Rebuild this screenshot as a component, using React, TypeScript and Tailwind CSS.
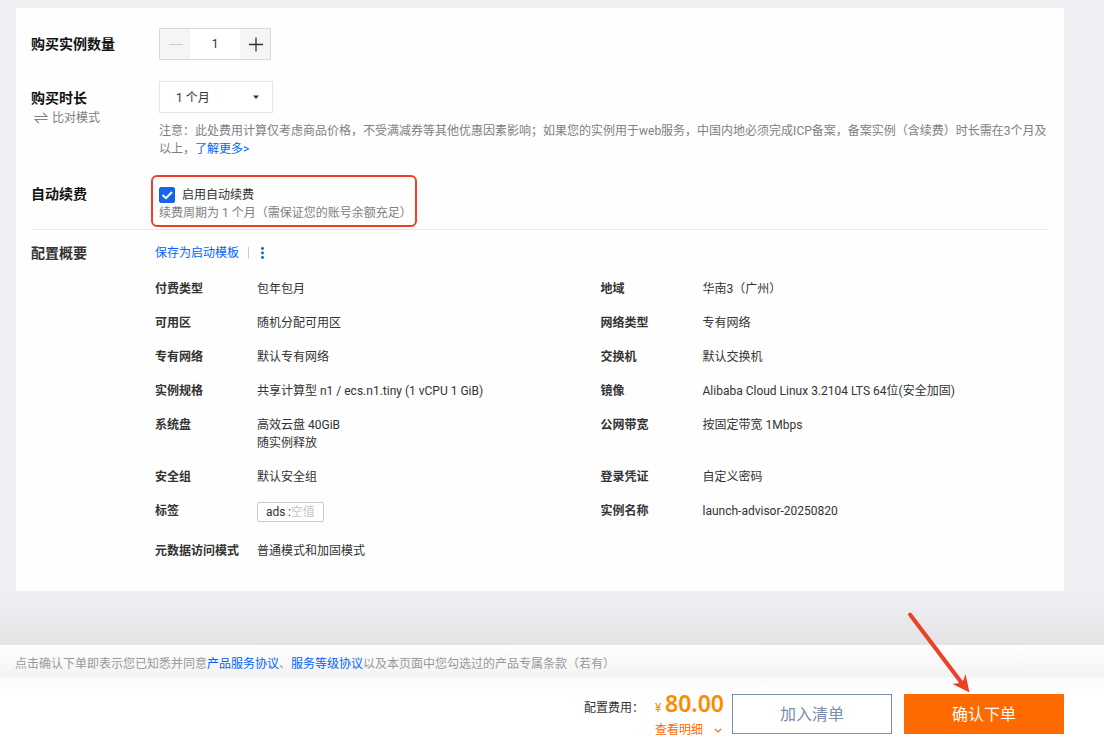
import React, { useState } from 'react';

type SummaryItem = {
    label: string;
    value: React.ReactNode;
};

const summary: SummaryItem[] = [
    { label: '付费类型', value: '包年包月' },
    { label: '地域', value: '华南3（广州）' },
    { label: '可用区', value: '随机分配可用区' },
    { label: '网络类型', value: '专有网络' },
    { label: '专有网络', value: '默认专有网络' },
    { label: '交换机', value: '默认交换机' },
    { label: '实例规格', value: '共享计算型 n1 / ecs.n1.tiny (1 vCPU 1 GiB)' },
    { label: '镜像', value: 'Alibaba Cloud Linux 3.2104 LTS 64位(安全加固)' },
    { label: '系统盘', value: <>高效云盘 40GiB<br />随实例释放</> },
    { label: '公网带宽', value: '按固定带宽 1Mbps' },
    { label: '安全组', value: '默认安全组' },
    { label: '登录凭证', value: '自定义密码' },
    {
        label: '标签',
        value: (
            <span className="mb-1 flex h-5 w-fit items-center rounded-xs border border-[#c8c8c8] px-2">
                ads&thinsp;:<span className="text-[#c8c8c8]">空值</span>
            </span>
        ),
    },
    { label: '实例名称', value: 'launch-advisor-20250820' },
    { label: '元数据访问模式', value: '普通模式和加固模式' },
];

const SwapIcon: React.FC = () => (
    <svg width="14" height="12" viewBox="0 0 14 12" fill="none" stroke="#808080" strokeWidth="1.1">
        <path d="M0.5 4.5H13L9 0.8" />
        <path d="M13.5 7.5H1L5 11.2" />
    </svg>
);

const Stepper: React.FC = () => {
    const [count, setCount] = useState(1);

    return (
        <div className="flex h-8 w-28 border border-[#d9d9d9]">
            <button
                type="button"
                aria-label="减少"
                disabled={count <= 1}
                onClick={() => setCount(count - 1)}
                className="flex w-[30px] items-center justify-center bg-[#f4f5f7] text-[#333] disabled:text-[#ccc]"
            >
                <svg width="16" height="16" viewBox="0 0 16 16" stroke="currentColor">
                    <path d="M2 8.5H16" />
                </svg>
            </button>
            <input
                id="amount"
                value={count}
                onChange={(e) => setCount(Number(e.target.value) || 1)}
                className="w-0 flex-1 bg-white text-center text-xs text-[#333] outline-none"
            />
            <button
                type="button"
                aria-label="增加"
                onClick={() => setCount(count + 1)}
                className="flex w-[30px] items-center justify-center bg-[#f4f5f7] text-[#333]"
            >
                <svg width="16" height="16" viewBox="0 0 16 16" stroke="currentColor" strokeWidth="1.3">
                    <path d="M2 8.5H16M9 1.5V15.5" />
                </svg>
            </button>
        </div>
    );
};

const PurchaseForm: React.FC = () => (
    <>
        <div className="flex items-center">
            <label htmlFor="amount" className="w-32 shrink-0 text-sm font-bold text-[#111]">购买实例数量</label>
            <Stepper />
        </div>

        <div className="mt-[21px] flex">
            <div className="w-32 shrink-0">
                <label htmlFor="period" className="mt-2 block text-sm leading-[18px] font-bold text-[#111]">购买时长</label>
                <button type="button" className="mt-[2px] ml-[3px] flex items-center gap-1 leading-[18px] text-[#808080]">
                    <SwapIcon />
                    比对模式
                </button>
            </div>
            <div className="flex-1">
                <div className="relative w-[114px]">
                    <select
                        id="period"
                        className="block h-8 w-full appearance-none border border-[#e5e5e5] bg-white pt-[2px] pl-4 text-[#333]"
                    >
                        <option>1 个月</option>
                        <option>3 个月</option>
                        <option>6 个月</option>
                    </select>
                    <svg className="pointer-events-none absolute top-[14px] right-[14px]" width="6" height="4" viewBox="0 0 6 4" fill="#333">
                        <path d="M0 0.5H6L3 4Z" />
                    </svg>
                </div>
                <p className="mt-[9px] leading-[18px] text-[#808080]">
                    注意：此处费用计算仅考虑商品价格，不受满减券等其他优惠因素影响；如果您的实例用于web服务，中国内地必须完成ICP备案，备案实例（含续费）时长需在3个月及以上，
                    <a href="#more" className="text-[#0064ff]">了解更多&gt;</a>
                </p>
            </div>
        </div>

        <div className="mt-[17px] flex pb-[2px]">
            <div className="w-[120px] shrink-0 pt-[10px] text-sm leading-[18px] font-bold text-[#111]">自动续费</div>
            <div className="rounded-md border-2 border-[#ee3f27] pt-[9px] pr-[3px] pb-[3px] pl-[6px]">
                <label className="flex items-center gap-[7px] leading-[18px] text-[#333]">
                    <span className="relative flex">
                        <input
                            type="checkbox"
                            defaultChecked
                            className="peer h-4 w-4 appearance-none rounded-xs border border-[#bbb] checked:border-[#1366ec] checked:bg-[#1366ec]"
                        />
                        <svg
                            className="pointer-events-none absolute inset-0 hidden peer-checked:block"
                            width="16"
                            height="16"
                            viewBox="0 0 16 16"
                            fill="none"
                            stroke="#fff"
                            strokeWidth="2"
                        >
                            <path d="M3.5 8L7 11.2L13 5" />
                        </svg>
                    </span>
                    启用自动续费
                </label>
                <p className="leading-[18px] text-[#808080]">续费周期为 1 个月（需保证您的账号余额充足）</p>
            </div>
        </div>
    </>
);

const ConfigSummary: React.FC = () => (
    <div className="flex border-t border-[#e8e8e8] pt-[14px]">
        <h2 className="w-[124px] shrink-0 text-sm leading-[18px] font-bold text-[#333]">配置概要</h2>
        <div className="flex-1">
            <div className="flex h-[18px] items-center">
                <button type="button" className="text-[#0064ff]">保存为启动模板</button>
                <span className="mr-3 ml-[9px] h-3 w-px bg-[#ccc]" />
                <button type="button" aria-label="更多">
                    <svg width="3" height="12" viewBox="0 0 3 12" fill="#0064c8">
                        <circle cx="1.5" cy="1.5" r="1.4" />
                        <circle cx="1.5" cy="6" r="1.4" />
                        <circle cx="1.5" cy="10.5" r="1.4" />
                    </svg>
                </button>
            </div>
            <dl className="mt-[18px] grid grid-cols-2 gap-y-4 pr-[2px]">
                {summary.map((item) => (
                    <div key={item.label} className="flex leading-[18px]">
                        <dt className="w-[102px] shrink-0 font-bold text-[#333]">{item.label}</dt>
                        <dd className="text-[#333]">{item.value}</dd>
                    </div>
                ))}
            </dl>
        </div>
    </div>
);

const OrderBar: React.FC = () => (
    <footer className="bg-white">
        <p className="bg-linear-to-b from-white to-[#f3f3f3] px-[15px] pt-[10px] pb-1 leading-[18px] text-[#999]">
            点击确认下单即表示您已知悉并同意
            <a href="#product" className="text-[#0064ff]">产品服务协议</a>、
            <a href="#sla" className="text-[#0064ff]">服务等级协议</a>
            以及本页面中您勾选过的产品专属条款（若有）
        </p>
        <div className="flex items-start justify-end bg-linear-to-b from-[#fafafa] to-white to-25% pr-10 pb-[10px]">
            <span className="mt-[22px] leading-[18px] text-[#333]">配置费用：</span>
            <div className="mt-[14px] mr-2 ml-[11px] w-[69px]">
                <div className="flex h-6 items-baseline justify-between leading-6 text-[#ff8a00]">
                    <span>¥</span>
                    <span className="font-['Noto_Sans'] text-[23px] font-semibold">80.00</span>
                </div>
                <button type="button" className="mt-[6px] flex w-full items-center justify-between leading-[18px] text-[#ff6a00]">
                    查看明细
                    <svg className="mr-[2px]" width="8" height="5" viewBox="0 0 8 5" fill="none" stroke="currentColor" strokeWidth="1.2">
                        <path d="M0.8 0.8L4 4L7.2 0.8" />
                    </svg>
                </button>
            </div>
            <button type="button" className="mt-[17px] h-10 w-40 border border-[#7c8dad] bg-white pt-[2px] text-base text-[#7c8dad]">
                加入清单
            </button>
            <div className="relative mt-[17px] ml-3">
                <button type="button" className="block h-10 w-40 bg-[#ff6a00] pt-[2px] text-base text-white">确认下单</button>
                <svg
                    className="pointer-events-none absolute bottom-full left-0"
                    width="70"
                    height="84"
                    viewBox="0 0 70 84"
                    fill="#ee3f27"
                >
                    <path d="M6 4.500L57 72" stroke="#ee3f27" strokeWidth="4" strokeLinecap="round" />
                    <path d="M65.500 82.500L48.500 74L55.500 73L59.500 70L61.500 64Z" />
                </svg>
            </div>
        </div>
    </footer>
);

const App: React.FC = () => (
    <div className="flex min-h-screen flex-col bg-[#eff0f4] font-['Roboto','Noto_Sans_CJK_SC',sans-serif] text-xs">
        <main className="mt-2 mr-10 ml-4 bg-[#fefefe] pt-5 pr-4 pb-[31px] pl-[15px]">
            <PurchaseForm />
            <ConfigSummary />
        </main>
        <div className="min-h-[54px] flex-1 bg-linear-to-b from-[#eff0f4] to-[#e4e4e6]" />
        <OrderBar />
    </div>
);

export default App;
